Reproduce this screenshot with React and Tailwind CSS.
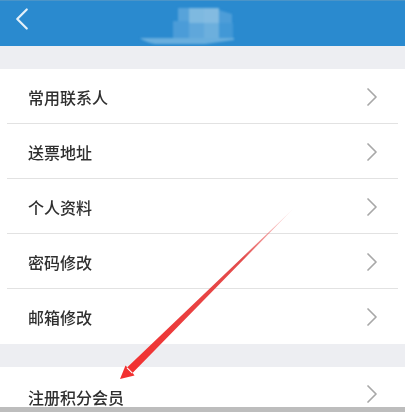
import { ChevronLeft, ChevronRight } from "lucide-react";
import React from "react";

const group1 = ["常用联系人", "送票地址", "个人资料", "密码修改", "邮箱修改"];

function Row({ label, last }) {
  return (
    <div className="h-[55px] mx-[7px] pl-[21px] pr-[10px] flex items-center justify-between relative">
      <span className="text-[16px] leading-none font-medium text-[#2f2f2f] blur-[0.4px]">{label}</span>
      <ChevronRight className="w-[32px] h-[32px] text-[#a8a8a8] blur-[0.3px]" strokeWidth={1.3} />
      {!last && <div className="absolute left-0 right-0 bottom-0 h-px bg-[#e2e2e2]"></div>}
    </div>
  );
}

function Mosaic() {
  return (
    <svg className="absolute left-[135px] top-[2px]" width="105" height="44" viewBox="0 0 105 44">
      <g style={{ filter: "blur(0.8px)" }}>
        <rect x="43" y="5" width="11" height="15" fill="#57a3da" />
        <rect x="54" y="5" width="15" height="15" fill="#7eb9e0" />
        <rect x="69" y="5" width="15" height="15" fill="#83bbe1" />
        <path d="M84 7 L97 11 L97 20 L84 20 Z" fill="#4d9dd8" />
        <rect x="38" y="18" width="16" height="17" fill="#4b9cd8" />
        <rect x="54" y="20" width="15" height="15" fill="#5fa7db" />
        <rect x="69" y="20" width="15" height="15" fill="#6cafdd" />
        <rect x="84" y="20" width="14" height="15" fill="#4298d6" />
        <path d="M5 35 L99 35 L99 37 L70 41 L20 41 Q10 39 5 35 Z" fill="#69aedd" />
      </g>
    </svg>
  );
}

function Arrow() {
  return (
    <svg className="absolute left-0 top-0 pointer-events-none" width="405" height="412" viewBox="0 0 405 412">
      <defs>
        <linearGradient id="fade" gradientUnits="userSpaceOnUse" x1="293" y1="209" x2="128" y2="372">
          <stop offset="0" stopColor="#f05050" stopOpacity="0.1" />
          <stop offset="0.3" stopColor="#e03a3a" stopOpacity="0.9" />
          <stop offset="1" stopColor="#f23030" />
        </linearGradient>
      </defs>
      <path
        d="M293 209 L126.5 368 L132 373.5 Z M120 379 L125.5 365.5 L129.5 369.5 L132 372 L134.5 375.5 Z"
        fill="url(#fade)"
        style={{ filter: "blur(0.4px)" }}
      />
    </svg>
  );
}

export default function App() {
  return (
    <div className="w-[405px] h-[412px] overflow-hidden relative bg-[#edeef2] font-['Noto_Sans_CJK_SC','Liberation_Sans',sans-serif]">
      <div className="h-[46px] bg-[#2a8acf] border-t border-[#4a94c8] relative">
        <ChevronLeft className="absolute left-[3px] top-[-1px] w-[38px] h-[38px] text-[#e4f0f9]" strokeWidth={1.4} />
        <Mosaic />
      </div>
      <div className="h-[23px]"></div>
      <div className="bg-white">
        {group1.map((label, i) => (
          <Row key={label} label={label} last={i === group1.length - 1} />
        ))}
      </div>
      <div className="h-[23px]"></div>
      <div className="bg-white h-[40px] pl-[28px] pr-[17px] flex justify-between">
        <span className="text-[16px] leading-none font-medium text-[#2f2f2f] mt-[22px] blur-[0.4px]">注册积分会员</span>
        <ChevronRight className="w-[32px] h-[32px] text-[#a8a8a8] mt-[11px] blur-[0.3px]" strokeWidth={1.3} />
      </div>
      <div className="h-[6px] bg-[#bdbdbd]"></div>
      <Arrow />
    </div>
  );
}
